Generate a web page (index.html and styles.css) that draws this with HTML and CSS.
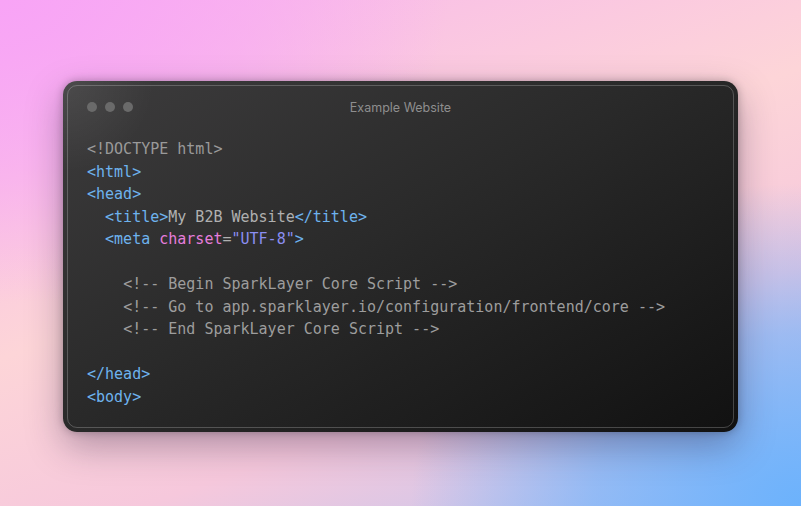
FILE: index.html
```html
<!DOCTYPE html>
<html lang="en">
<head>
<meta charset="UTF-8">
<title>Example Website</title>
<link rel="stylesheet" href="styles.css">
</head>
<body>
<div class="window">
  <div class="frame">
    <div class="titlebar">
      <div class="dots"><span class="dot"></span><span class="dot"></span><span class="dot"></span></div>
      <div class="title">Example Website</div>
      <div></div>
    </div>
<pre class="code"><span class="doc">&lt;!DOCTYPE html&gt;</span>
<span class="tag">&lt;html&gt;</span>
<span class="tag">&lt;head&gt;</span>
  <span class="tag">&lt;title&gt;</span><span class="txt">My B2B Website</span><span class="tag">&lt;/title&gt;</span>
  <span class="tag">&lt;meta </span><span class="attr">charset</span><span class="txt">=</span><span class="str">"UTF-8"</span><span class="tag">&gt;</span>

    <span class="com">&lt;!-- Begin SparkLayer Core Script --&gt;</span>
    <span class="com">&lt;!-- Go to app.sparklayer.io/configuration/frontend/core --&gt;</span>
    <span class="com">&lt;!-- End SparkLayer Core Script --&gt;</span>

<span class="tag">&lt;/head&gt;</span>
<span class="tag">&lt;body&gt;</span></pre>
  </div>
</div>
</body>
</html>
```
FILE: styles.css
```css
html, body {
  margin: 0;
  height: 100%;
}
body {
  box-sizing: border-box;
  padding-top: 81px;
  background:
    radial-gradient(ellipse 65% 85% at 100% 100%, rgba(108,178,252,1) 0%, rgba(108,178,252,0.6) 40%, rgba(108,178,252,0) 75%),
    radial-gradient(ellipse 70% 75% at 0% 0%, rgba(248,164,246,1) 0%, rgba(248,166,246,0.55) 45%, rgba(248,166,246,0) 80%),
    linear-gradient(160deg, #f7b4ee 0%, #fdd5d8 45%, #f6c8dc 70%, #b8c6f2 100%);
  overflow: hidden;
}
.window {
  width: 675px;
  height: 351px;
  box-sizing: border-box;
  margin: 0 auto;
  padding: 4px;
  border-radius: 14px;
  background:
    radial-gradient(circle at 0% 0%, rgba(255,255,255,0.08) 0%, rgba(255,255,255,0) 12%),
    linear-gradient(150deg, #3d3c3d 0%, #2a2a2a 45%, #111 100%);
  box-shadow: 0 14px 36px rgba(40, 30, 60, 0.35), 0 0 8px rgba(0,0,0,0.25);
}
.frame {
  height: 100%;
  box-sizing: border-box;
  border: 1px solid rgba(255, 255, 255, 0.22);
  border-radius: 10px;
  padding: 0 19px;
}
.titlebar {
  height: 42px;
  display: grid;
  grid-template-columns: 1fr auto 1fr;
  align-items: center;
}
.dots {
  display: flex;
  gap: 8px;
}
.dot {
  width: 10px;
  height: 10px;
  border-radius: 50%;
  background: #6a6a6a;
}
.title {
  font-family: Inter, "Noto Sans", sans-serif;
  font-size: 12.5px;
  color: #8e8e8e;
}
.code {
  margin: 10px 0 0;
  font-family: "DejaVu Sans Mono", monospace;
  font-size: 15px;
  line-height: 22.5px;
  color: #a8a8a8;
}
.doc { color: #9a9a9a; }
.tag { color: #6eb3ee; }
.txt { color: #b0b0b0; }
.attr { color: #e67ddc; }
.str { color: #8b8ef2; }
.com { color: #9d9d9d; }
```
